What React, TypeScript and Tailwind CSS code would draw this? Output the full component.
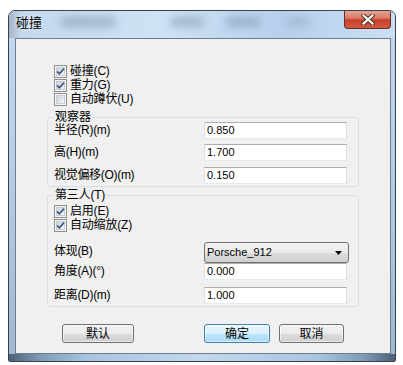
import React from "react";

const FONT = {
  fontFamily: '"Liberation Sans", "Noto Sans CJK SC", sans-serif',
};

function CheckBox({ checked }: { checked: boolean }) {
  return (
    <svg width="13" height="13" viewBox="0 0 13 13" className="shrink-0">
      <defs>
        <linearGradient id="cbg" x1="0" y1="0" x2="1" y2="1">
          <stop offset="0" stopColor="#cbcfd5" />
          <stop offset="1" stopColor="#f6f6f6" />
        </linearGradient>
      </defs>
      <rect x="0.5" y="0.5" width="12" height="12" fill="#f4f4f4" stroke="#8e8f8f" />
      <rect x="2.5" y="2.5" width="8" height="8" fill="url(#cbg)" stroke="#c9ccd1" />
      {checked && (
        <path
          d="M3 6.3 L5.4 8.8 L10 3.6"
          fill="none"
          stroke="#3d5a8a"
          strokeWidth="1.7"
        />
      )}
    </svg>
  );
}

function CheckRow({ label, checked }: { label: string; checked: boolean }) {
  return (
    <div className="h-[14px] flex items-center gap-[3px]">
      <CheckBox checked={checked} />
      <span className="text-[12px] leading-none text-black tracking-[-0.2px]">{label}</span>
    </div>
  );
}

function TextBox({ value }: { value: string }) {
  return (
    <div className="w-[143px] h-[17px] bg-white border border-[#dbdfe6] border-t-[#abadb3] border-b-[#e3e9ef] flex items-center pl-[2px] text-[11px] text-black">
      {value}
    </div>
  );
}

function FieldRow({ label, value, className = "" }: { label: string; value: string; className?: string }) {
  return (
    <div className={"flex items-center h-[17px] " + className}>
      <span className="w-[150px] text-[12px] leading-none text-black -mt-[2px] tracking-[-0.3px]">{label}</span>
      <TextBox value={value} />
    </div>
  );
}

function Button({ label, primary, width }: { label: string; primary?: boolean; width: string }) {
  const skin = primary
    ? "border-[#3c7fb1] bg-[linear-gradient(to_bottom,#eaf6fd_0%,#d9f0fc_50%,#bee6fd_51%,#a7d9f5_100%)]"
    : "border-[#707070] bg-[linear-gradient(to_bottom,#f2f2f2_0%,#ebebeb_50%,#dddddd_51%,#cfcfcf_100%)]";
  return (
    <div
      className={`${width} h-[19px] border rounded-[3px] ${skin} flex items-center justify-center text-[12px] leading-none text-black shadow-[inset_0_0_0_1px_rgba(255,255,255,0.6)]`}
    >
      {label}
    </div>
  );
}

export default function App() {
  return (
    <div className="w-[403px] h-[365px] bg-white pl-[8px] pt-[10px]" style={FONT}>
      <div className="w-[388px] h-[352px] border border-[#37414b] rounded-t-[7px] rounded-b-[2px] overflow-hidden flex flex-col bg-[linear-gradient(to_bottom,#c3d9f1,#b7cfe8_40%,#9fb7d0_100%)]">
        {/* title bar */}
        <div className="h-[27px] flex items-start bg-[linear-gradient(to_right,#a4b4c4_0px,#c4d8ee_12px,#cfe2f5_40%,#b6d0ec_70%,#cadff4_100%)]">
          <span className="mt-[5px] ml-[7px] text-[13px] leading-none text-black [text-shadow:0_0_4px_#ffffff]">
            碰撞
          </span>
          <span className="mt-[6px] ml-[18px] w-[56px] h-[10px] rounded-full bg-[#6f8299] opacity-45 blur-[4px]" />
          <span className="mt-[7px] ml-[54px] w-[34px] h-[8px] rounded-full bg-[#5f758d] opacity-45 blur-[4px]" />
          <span className="mt-[7px] ml-[22px] w-[34px] h-[8px] rounded-full bg-[#5f758d] opacity-45 blur-[4px]" />
          <span className="mt-[7px] ml-[26px] w-[24px] h-[8px] rounded-full bg-[#72879d] opacity-35 blur-[4px]" />
          <div className="ml-auto mr-[4px] -mt-px w-[47px] h-[19px] rounded-b-[4px] border border-[#6b2a22] border-t-0 bg-[linear-gradient(to_bottom,#e9a99a_0%,#dc7b66_45%,#c8402a_55%,#d05a3f_100%)] flex items-center justify-center">
            <svg width="14" height="11" viewBox="0 0 14 11">
              <path d="M2.5 1.5 L11.5 9.5 M11.5 1.5 L2.5 9.5" stroke="#4a3430" strokeWidth="4.2" strokeLinecap="square" />
              <path d="M2.5 1.5 L11.5 9.5 M11.5 1.5 L2.5 9.5" stroke="#ffffff" strokeWidth="2.2" strokeLinecap="square" />
            </svg>
          </div>
        </div>

        {/* client area */}
        <div className="ml-[6px] mr-[4px] w-[376px] h-[316px] border border-[#6d7d8c] bg-[#f0f0f0] pl-[31px] pt-[25px] text-black">
          <div className="ml-[7px]">
            <CheckRow label="碰撞(C)" checked />
            <CheckRow label="重力(G)" checked />
            <CheckRow label="自动蹲伏(U)" checked={false} />
          </div>

          <fieldset className="mt-[5px] w-[312px] border border-[#d5dfe5] rounded-[3px] pl-[6px] pb-[2px]">
            <legend className="px-[1px] text-[12px] leading-[12px]">观察器</legend>
            <FieldRow label="半径(R)(m)" value="0.850" className="-mt-px" />
            <FieldRow label="高(H)(m)" value="1.700" className="mt-[5px]" />
            <FieldRow label="视觉偏移(O)(m)" value="0.150" className="mt-[6px]" />
          </fieldset>

          <fieldset className="mt-[2px] w-[312px] border border-[#d5dfe5] rounded-[3px] pl-[6px] pb-[2px]">
            <legend className="px-[1px] text-[12px] leading-[12px] tracking-[-0.2px]">第三人(T)</legend>
            <div className="mt-[3px]">
              <CheckRow label="启用(E)" checked />
              <CheckRow label="自动缩放(Z)" checked />
            </div>
            <div className="mt-[10px] flex items-center h-[21px]">
              <span className="w-[150px] text-[12px] leading-none -mt-[4px] tracking-[-0.3px]">体现(B)</span>
              <div className="w-[145px] h-[21px] border border-[#707070] rounded-[3px] bg-[linear-gradient(to_bottom,#f2f2f2_0%,#ebebeb_50%,#dddddd_51%,#cfcfcf_100%)] flex items-center pl-[2px] pr-[6px] text-[11px]">
                <span>Porsche_912</span>
                <svg width="7" height="4" viewBox="0 0 7 4" className="ml-auto">
                  <path d="M0 0 H7 L3.5 4 Z" fill="#000" />
                </svg>
              </div>
            </div>
            <FieldRow label="角度(A)(°)" value="0.000" className="mt-0" />
            <FieldRow label="距离(D)(m)" value="1.000" className="mt-[7px]" />
          </fieldset>

          <div className="mt-[17px] flex">
            <div className="ml-[15px]">
              <Button label="默认" width="w-[72px]" />
            </div>
            <div className="ml-[70px]">
              <Button label="确定" primary width="w-[66px]" />
            </div>
            <div className="ml-[9px]">
              <Button label="取消" width="w-[65px]" />
            </div>
          </div>
        </div>

        {/* bottom frame */}
        <div className="flex-1 bg-[linear-gradient(to_right,#4b6076_0%,#7f9ab5_8%,#a9c4e0_20%,#c3d8ee_50%,#a9c4e0_80%,#7f9ab5_92%,#4b6076_100%)]" />
      </div>
    </div>
  );
}
